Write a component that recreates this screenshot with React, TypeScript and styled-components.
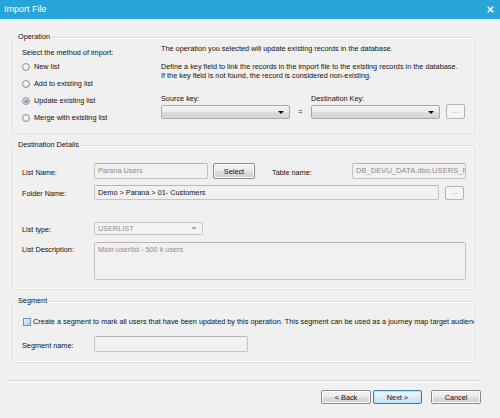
import React from 'react';
import styled, { createGlobalStyle } from 'styled-components';

const GlobalStyle = createGlobalStyle`
  html, body {
    margin: 0;
    padding: 0;
    background: #f0f0f0;
  }
  body {
    font-family: "Liberation Sans", Arial, sans-serif;
  }
`;

const Window = styled.div`
  width: 500px;
  height: 418px;
  background: #f0f0f0;
  display: flex;
  flex-direction: column;
  overflow: hidden;
  font-size: 7.3px;
  line-height: 9px;
  color: #111;
`;

const TitleBar = styled.div`
  height: 19px;
  box-sizing: border-box;
  background: #28a4d8;
  color: #fff;
  display: flex;
  align-items: center;
  justify-content: space-between;
  padding: 0 6px 0 4px;
  font-size: 9px;
`;

const Body = styled.div`
  display: flex;
  flex-direction: column;
  gap: 6px;
  padding: 13px 25px 0 12px;
`;

const Group = styled.fieldset<{ $pb: number }>`
  margin: 0;
  padding: 0 0 ${p => p.$pb}px 0;
  min-width: 0;
  border: 1px solid #d5dfe5;
  border-radius: 3px;
  box-shadow: inset 0 0 0 1px #fbfbfb;
`;

const Legend = styled.legend`
  margin-left: 4px;
  padding: 0 1px;
  line-height: 10px;
  background: #f0f0f0;
  position: relative;
`;

const OperationGrid = styled.div`
  display: grid;
  grid-template-columns: 139px auto;
  padding-left: 9px;
`;

const Column = styled.div`
  display: flex;
  flex-direction: column;
`;

const Caption = styled.div<{ $mt?: number }>`
  margin-top: ${p => p.$mt ?? 0}px;
  white-space: nowrap;
`;

const RadioRow = styled.div`
  height: 17px;
  display: flex;
  align-items: center;
  gap: 4px;
`;

const RadioDot = styled.span<{ $checked?: boolean }>`
  width: 8px;
  height: 8px;
  box-sizing: border-box;
  border-radius: 50%;
  border: 1px solid #939393;
  background: radial-gradient(circle at 40% 35%, #ffffff 0%, #e6e6e6 60%, #cdcdcd 100%);
  display: flex;
  align-items: center;
  justify-content: center;

  &::after {
    content: '';
    display: ${p => (p.$checked ? 'block' : 'none')};
    width: 4px;
    height: 4px;
    border-radius: 50%;
    background: radial-gradient(circle at 35% 35%, #9fd3f6, #1f5f9c);
  }
`;

const KeyRow = styled.div`
  display: flex;
  align-items: flex-end;
  margin-top: 14px;
`;

const KeyField = styled.div`
  width: 129px;
  display: flex;
  flex-direction: column;
  gap: 2px;
`;

const Equals = styled.div`
  width: 21px;
  height: 14px;
  line-height: 14px;
  text-align: center;
`;

const Combo = styled.div<{ $w?: number; $h?: number; $disabled?: boolean }>`
  width: ${p => (p.$w ? `${p.$w}px` : '100%')};
  height: ${p => p.$h ?? 14}px;
  box-sizing: border-box;
  border: 1px solid ${p => (p.$disabled ? '#c4c7c9' : '#a9a9a9')};
  border-radius: 2px;
  background: ${p =>
    p.$disabled
      ? '#f4f4f4'
      : 'linear-gradient(#f4f4f4 0%, #ececec 50%, #dedede 51%, #d4d4d4 100%)'};
  color: #8d8d8d;
  display: flex;
  align-items: center;
  justify-content: space-between;
  padding: 0 5px 0 3px;
`;

const Arrow = styled.span<{ $disabled?: boolean }>`
  width: 0;
  height: 0;
  border-left: 3px solid transparent;
  border-right: 3px solid transparent;
  border-top: 3px solid ${p => (p.$disabled ? '#a8a8a8' : '#111')};
`;

const Ellipsis = styled.div<{ $h: number }>`
  width: 19px;
  height: ${p => p.$h}px;
  box-sizing: border-box;
  margin-left: 6px;
  border: 1px solid #b2b5b8;
  border-radius: 2px;
  background: #f4f4f4;
  color: #a58c8c;
  font-size: 7px;
  display: flex;
  align-items: center;
  justify-content: center;
  padding-bottom: 2px;
`;

const DetailRows = styled.div`
  display: flex;
  flex-direction: column;
  padding-left: 9px;
`;

const Row = styled.div<{ $mt: number; $top?: boolean }>`
  display: flex;
  align-items: ${p => (p.$top ? 'flex-start' : 'center')};
  margin-top: ${p => p.$mt}px;
  white-space: nowrap;
`;

const FieldLabel = styled.div<{ $w?: number; $ml?: number; $pt?: number }>`
  width: ${p => p.$w ?? 72}px;
  margin-left: ${p => p.$ml ?? 0}px;
  padding-top: ${p => p.$pt ?? 1}px;
  flex-shrink: 0;
`;

const TextBox = styled.div<{ $w: number; $h: number; $muted?: boolean; $fs?: number }>`
  width: ${p => p.$w}px;
  height: ${p => p.$h}px;
  box-sizing: border-box;
  border: 1px solid #c2c4c6;
  border-top-color: #b4b6b8;
  border-radius: 2px;
  background: #f1f1f1;
  color: ${p => (p.$muted ? '#8d8d8d' : '#111')};
  font-size: ${p => p.$fs ?? 7.3}px;
  padding: 2px 3px;
  overflow: hidden;
  white-space: nowrap;
  flex-shrink: 0;
`;

const PushButton = styled.div<{ $w: number; $ml?: number; $h?: number; $default?: boolean }>`
  width: ${p => p.$w}px;
  height: ${p => p.$h ?? 14}px;
  margin-left: ${p => p.$ml ?? 0}px;
  box-sizing: border-box;
  border: 1px solid ${p => (p.$default ? '#3c7fb1' : '#8a8a8a')};
  border-radius: 2px;
  background: ${p =>
    p.$default
      ? 'linear-gradient(#eef6fc 0%, #e2eff9 50%, #d3e8f7 51%, #c8e1f5 100%)'
      : 'linear-gradient(#f3f3f3 0%, #ebebeb 50%, #dddddd 51%, #d0d0d0 100%)'};
  box-shadow: ${p => (p.$default ? 'inset 0 0 0 1px #bfe3fa' : 'inset 0 0 0 1px #fafafa')};
  display: flex;
  align-items: center;
  justify-content: center;
  flex-shrink: 0;
`;

const CheckRow = styled.div`
  display: flex;
  align-items: center;
  gap: 2px;
  margin-top: 11px;
  padding-left: 10px;
  white-space: nowrap;
  overflow: hidden;
`;

const CheckBox = styled.span`
  width: 8px;
  height: 8px;
  box-sizing: border-box;
  flex-shrink: 0;
  border: 1px solid #6f93b3;
  background: linear-gradient(135deg, #e4f1fa, #b5d4ec);
`;

const Footer = styled.div`
  display: flex;
  flex-direction: column;
  padding: 17px 19px 0 6px;
`;

const Separator = styled.div`
  border-top: 1px solid #d5d5d5;
  border-bottom: 1px solid #ffffff;
`;

const ButtonBar = styled.div`
  display: flex;
  justify-content: flex-end;
  margin-top: 8px;
`;

const CloseIcon = () => (
  <svg width="7" height="7" viewBox="0 0 7 7">
    <path d="M0.8 0.8 L6.2 6.2 M6.2 0.8 L0.8 6.2" stroke="#fff" strokeWidth="1.6" />
  </svg>
);

const methods = [
  { label: 'New list', checked: false },
  { label: 'Add to existing list', checked: false },
  { label: 'Update existing list', checked: true },
  { label: 'Merge with existing list', checked: false },
];

const App: React.FC = () => {
  return (
    <>
      <GlobalStyle />
      <Window>
        <TitleBar>
          <span>Import File</span>
          <CloseIcon />
        </TitleBar>
        <Body>
          <Group $pb={7}>
            <Legend>Operation</Legend>
            <OperationGrid>
              <Column>
                <Caption $mt={6}>Select the method of import:</Caption>
                <Column style={{ marginTop: 1 }}>
                  {methods.map(m => (
                    <RadioRow key={m.label}>
                      <RadioDot $checked={m.checked} />
                      <span>{m.label}</span>
                    </RadioRow>
                  ))}
                </Column>
              </Column>
              <Column>
                <Caption $mt={2}>The operation you selected will update existing records in the database.</Caption>
                <Caption $mt={9}>
                  Define a key field to link the records in the import file to the existing records in the database.
                  <br />
                  If the key field is not found, the record is considered non-existing.
                </Caption>
                <KeyRow>
                  <KeyField>
                    <span>Source key:</span>
                    <Combo>
                      <span />
                      <Arrow />
                    </Combo>
                  </KeyField>
                  <Equals>=</Equals>
                  <KeyField>
                    <span>Destination Key:</span>
                    <Combo>
                      <span />
                      <Arrow />
                    </Combo>
                  </KeyField>
                  <Ellipsis $h={15}>...</Ellipsis>
                </KeyRow>
              </Column>
            </OperationGrid>
          </Group>

          <Group $pb={9}>
            <Legend>Destination Details</Legend>
            <DetailRows>
              <Row $mt={13}>
                <FieldLabel $pt={3}>List Name:</FieldLabel>
                <TextBox $w={114} $h={16} $muted>Parana Users</TextBox>
                <PushButton $w={42} $h={16} $ml={5}>Select</PushButton>
                <FieldLabel $w={80} $ml={17} $pt={2}>Table name:</FieldLabel>
                <TextBox $w={114} $h={16} $muted $fs={7.6}>DB_DEVU_DATA.dbo.USERS_F</TextBox>
              </Row>
              <Row $mt={6}>
                <FieldLabel $pt={2}>Folder Name:</FieldLabel>
                <TextBox $w={345} $h={15}>Demo &gt; Parana &gt; 01- Customers</TextBox>
                <Ellipsis $h={14}>...</Ellipsis>
              </Row>
              <Row $mt={22}>
                <FieldLabel>List type:</FieldLabel>
                <Combo $w={109} $h={13} $disabled>
                  <span>USERLIST</span>
                  <Arrow $disabled />
                </Combo>
              </Row>
              <Row $mt={7} $top>
                <FieldLabel $pt={3}>List Description:</FieldLabel>
                <TextBox $w={372} $h={38} $muted>Main userlist - 500 k users</TextBox>
              </Row>
            </DetailRows>
          </Group>

          <Group $pb={10}>
            <Legend>Segment</Legend>
            <CheckRow>
              <CheckBox />
              <span>
                Create a segment to mark all users that have been updated by this operation. This segment can be used as a journey map target audience.
              </span>
            </CheckRow>
            <DetailRows>
              <Row $mt={10}>
                <FieldLabel $pt={2}>Segment name:</FieldLabel>
                <TextBox $w={154} $h={16} />
              </Row>
            </DetailRows>
          </Group>
        </Body>
        <Footer>
          <Separator />
          <ButtonBar>
            <PushButton $w={50}>&lt; Back</PushButton>
            <PushButton $w={49} $ml={2} $default>Next &gt;</PushButton>
            <PushButton $w={50} $ml={9}>Cancel</PushButton>
          </ButtonBar>
        </Footer>
      </Window>
    </>
  );
};

export default App;
